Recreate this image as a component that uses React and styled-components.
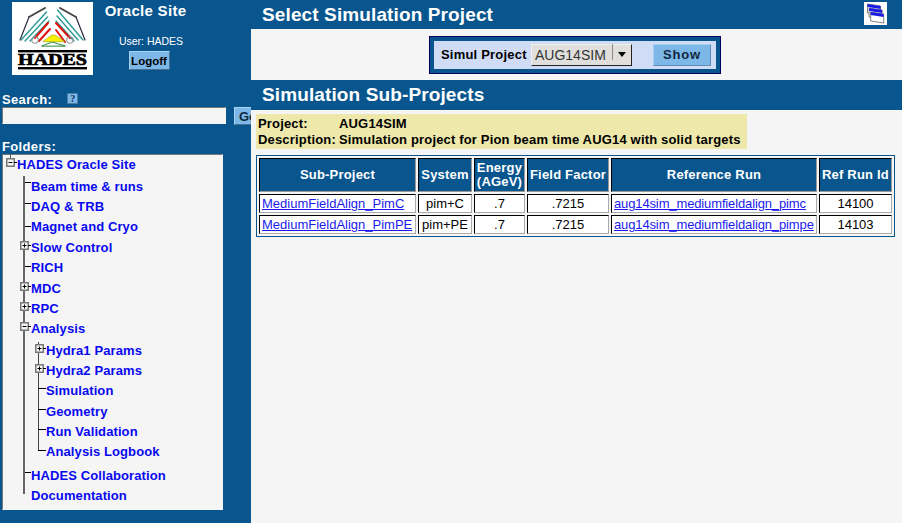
import styled, { createGlobalStyle } from "styled-components";

const BLUE = "#09568f";

const Global = createGlobalStyle`
   html, body {
      margin: 0;
      padding: 0;
      background: ${BLUE};
   }
   body {
      font-family: "Liberation Sans", Arial, sans-serif;
   }
`;

const tree = [
   { label: "Beam time & runs", top: 0, tick: 6 },
   { label: "DAQ & TRB", top: 0, tick: 7 },
   { label: "Magnet and Cryo", top: 0, tick: 10 },
   { label: "Slow Control", top: 1, box: "plus" },
   { label: "RICH", top: 0, tick: 9 },
   { label: "MDC", top: 1, box: "plus" },
   { label: "RPC", top: 0, box: "plus" },
   { label: "Analysis", top: 0, box: "minus" },
];

const analysis = [
   { label: "Hydra1 Params", top: 2, box: "plus" },
   { label: "Hydra2 Params", top: 0, box: "plus" },
   { label: "Simulation", top: 0, tick: 8 },
   { label: "Geometry", top: 1, tick: 8 },
   { label: "Run Validation", top: 0, tick: 8 },
   { label: "Analysis Logbook", top: 0, tick: 9 },
];

const rows = [
   ["MediumFieldAlign_PimC", "pim+C", ".7", ".7215", "aug14sim_mediumfieldalign_pimc", "14100"],
   ["MediumFieldAlign_PimPE", "pim+PE", ".7", ".7215", "aug14sim_mediumfieldalign_pimpe", "14103"],
];

function Logo() {
   return (
      <LogoBox>
         <svg width="81" height="73" viewBox="0 0 81 73">
            <g fill="none" strokeLinecap="round">
               <path d="M8 38 L17 15" stroke="#2b2b44" strokeWidth="1.2" />
               <path d="M73 38 L64 15" stroke="#2b2b44" strokeWidth="1.2" />
               <path d="M17 15 L33 6" stroke="#444" strokeWidth="2" />
               <path d="M48 6 L64 15" stroke="#444" strokeWidth="2" />
               <path d="M9 38 L34.5 10 M13 39 L35.5 15 M18 39 L37 19" stroke="#2a9a96" strokeWidth="1.4" />
               <path d="M71 38 L45.5 8 M66 38 L45 14 M62 39 L44 19" stroke="#2a9a96" strokeWidth="1.4" />
               <path d="M23 36 L36 21 M27 39 L38 27" stroke="#e01010" strokeWidth="2" />
               <path d="M58 36 L44 21 M53 40 L44 28" stroke="#e01010" strokeWidth="2" />
               <circle cx="23" cy="38" r="3.2" stroke="#999" strokeWidth="1.1" />
               <circle cx="58" cy="38" r="3.2" stroke="#999" strokeWidth="1.1" />
               <path d="M30 44 L40 40 L53 44 Z" stroke="#2a8a3a" strokeWidth="1" />
            </g>
            <path d="M30.7 39.7 L39.7 33 L43 33 L53 39.7 Z" fill="#f6f000" stroke="#8a8a10" strokeWidth="0.5" />
            <rect x="6" y="48" width="69" height="2.4" fill="#000" />
            <rect x="6" y="65" width="69" height="2.4" fill="#000" />
            <LogoText x="40.5" y="63" textLength="69" lengthAdjust="spacingAndGlyphs">
               HADES
            </LogoText>
         </svg>
      </LogoBox>
   );
}

function StackIcon() {
   return (
      <IconBox>
         <svg width="19" height="21" viewBox="0 0 19 21">
            {[0, 1, 2].map((i) => (
               <g key={i} transform={`translate(${i * 1.6 + 1.5} ${i * 4 + 1})`}>
                  <path d="M0 0 L13 2 L13 11 L0 9 Z" fill="#fff" stroke="#666" strokeWidth="0.8" />
                  <path d="M0 0 L13 2 L13 5 L0 3 Z" fill="#1a1ae6" />
               </g>
            ))}
         </svg>
      </IconBox>
   );
}

function Handle({ kind }) {
   return (
      <HandleBox>
         <svg width="11" height="9" viewBox="0 0 11 9">
            <rect x="0.75" y="0.75" width="7.5" height="7.5" fill="#f5f5f5" stroke="#777" strokeWidth="1.5" />
            <path d="M2.5 4.5 H6.5" stroke="#000" strokeWidth="1" />
            {kind === "plus" && <path d="M4.5 2.5 V6.5" stroke="#000" strokeWidth="1" />}
            <path d="M8 4.5 H11" stroke="#000" strokeWidth="1" />
         </svg>
      </HandleBox>
   );
}

function TreeRow({ item }) {
   return (
      <Row $top={item.top}>
         {item.box ? <Handle kind={item.box} /> : null}
         {item.tick ? <Tick $y={item.tick} /> : null}
         <FolderLink href="#">{item.label}</FolderLink>
      </Row>
   );
}

export default function App() {
   return (
      <>
         <Global />
         <Page>
            <Sidebar>
               <Brand>
                  <Logo />
                  <BrandText>
                     <SiteName>Oracle Site</SiteName>
                     <UserName>User: HADES</UserName>
                     <SmallButton>Logoff</SmallButton>
                  </BrandText>
               </Brand>

               <SearchLabel>
                  Search:
                  <HelpIcon>?</HelpIcon>
               </SearchLabel>
               <SearchRow>
                  <SearchInput />
                  <GoButton>Go</GoButton>
               </SearchRow>

               <FoldersLabel>Folders:</FoldersLabel>
               <TreeBox>
                  <RootRow>
                     <RootHandle>
                        <Handle kind="minus" />
                     </RootHandle>
                     <FolderLink href="#">HADES Oracle Site</FolderLink>
                  </RootRow>
                  <Branch>
                     {tree.map((item) => (
                        <TreeRow key={item.label} item={item} />
                     ))}
                     <SubBranch>
                        {analysis.map((item) => (
                           <TreeRow key={item.label} item={item} />
                        ))}
                     </SubBranch>
                     <Row $top={4}>
                        <Tick $y={7} />
                        <FolderLink href="#">HADES Collaboration</FolderLink>
                     </Row>
                     <Row $top={0}>
                        <FolderLink href="#">Documentation</FolderLink>
                     </Row>
                  </Branch>
               </TreeBox>
            </Sidebar>

            <Main>
               <TitleBar>
                  Select Simulation Project
                  <StackIcon />
               </TitleBar>

               <FormArea>
                  <ProjectForm>
                     <FormLabel>Simul Project</FormLabel>
                     <SelectBox>
                        <SelectValue>AUG14SIM</SelectValue>
                        <SelectArrow />
                     </SelectBox>
                     <ShowButton>Show</ShowButton>
                  </ProjectForm>
               </FormArea>

               <SubTitleBar>Simulation Sub-Projects</SubTitleBar>

               <Info>
                  <InfoLine>
                     <InfoKey>Project:</InfoKey>
                     <span>AUG14SIM</span>
                  </InfoLine>
                  <InfoLine>
                     <InfoKey>Description:</InfoKey>
                     <span>Simulation project for Pion beam time AUG14 with solid targets</span>
                  </InfoLine>
               </Info>

               <Grid>
                  <colgroup>
                     <col width="157" />
                     <col width="54" />
                     <col width="51" />
                     <col width="82" />
                     <col width="206" />
                     <col width="73" />
                  </colgroup>
                  <thead>
                     <tr>
                        <Th>Sub-Project</Th>
                        <Th>System</Th>
                        <Th>
                           Energy
                           <br />
                           (AGeV)
                        </Th>
                        <Th>Field Factor</Th>
                        <Th>Reference Run</Th>
                        <Th>Ref Run Id</Th>
                     </tr>
                  </thead>
                  <tbody>
                     {rows.map((r) => (
                        <tr key={r[0]}>
                           <Td>
                              <CellLink href="#">{r[0]}</CellLink>
                           </Td>
                           <Td $center>{r[1]}</Td>
                           <Td $center>{r[2]}</Td>
                           <Td $center>{r[3]}</Td>
                           <Td>
                              <CellLink href="#" $tight>{r[4]}</CellLink>
                           </Td>
                           <Td $center>{r[5]}</Td>
                        </tr>
                     ))}
                  </tbody>
               </Grid>
            </Main>
         </Page>
      </>
   );
}

const Page = styled.div`
   display: flex;
   width: 902px;
   height: 523px;
   overflow: hidden;
   background: ${BLUE};
`;

const Sidebar = styled.div`
   flex: 0 0 251px;
   width: 251px;
   overflow: hidden;
   box-sizing: border-box;
   padding: 2px 0 0 2px;
   color: #fff;
`;

const Brand = styled.div`
   display: flex;
   height: 73px;
   padding-left: 10px;
`;

const LogoBox = styled.div`
   width: 81px;
   height: 73px;
   background: #fff;
   svg {
      display: block;
   }
`;

const LogoText = styled.text`
   font-family: "Liberation Serif", serif;
   font-weight: 700;
   font-size: 16px;
   text-anchor: middle;
   fill: #000;
   stroke: #000;
   stroke-width: 0.7px;
`;

const BrandText = styled.div`
   width: 85px;
   margin-left: 10px;
   display: flex;
   flex-direction: column;
   align-items: center;
`;

const SiteName = styled.div`
   font-size: 15px;
   font-weight: 700;
   line-height: 18px;
   letter-spacing: 0.3px;
   white-space: nowrap;
`;

const UserName = styled.div`
   font-size: 10.5px;
   line-height: 12px;
   margin-top: 15px;
   margin-left: 11px;
   white-space: nowrap;
`;

const SmallButton = styled.button`
   box-sizing: border-box;
   width: 41px;
   height: 19px;
   margin: 4px 0 0 7px;
   padding: 0;
   background: #7db7e8;
   border: 1px solid;
   border-color: #a8d0f0 #4a6f90 #4a6f90 #a8d0f0;
   color: #000;
   font-family: inherit;
   font-size: 11.5px;
   font-weight: 700;
`;

const SearchLabel = styled.div`
   display: flex;
   align-items: center;
   height: 14px;
   margin-top: 17px;
   font-size: 13px;
   font-weight: 700;
   letter-spacing: 0.35px;
`;

const HelpIcon = styled.span`
   box-sizing: border-box;
   display: block;
   width: 11px;
   height: 11px;
   margin-left: 15px;
   margin-top: -2px;
   background: #7db7e8;
   border: 1px solid #4a7ea8;
   color: #10305a;
   font-family: "Liberation Serif", serif;
   font-size: 10px;
   line-height: 9px;
   letter-spacing: 0;
   text-align: center;
`;

const SearchRow = styled.div`
   display: flex;
   margin-top: 1px;
`;

const SearchInput = styled.div`
   box-sizing: border-box;
   flex: 0 0 224px;
   height: 17px;
   background: #f5f5f5;
   border: 1px solid;
   border-color: #777 #f5f5f5 #f5f5f5 #777;
`;

const GoButton = styled.button`
   box-sizing: border-box;
   flex: 0 0 34px;
   height: 18px;
   margin-left: 8px;
   padding: 0 0 0 4px;
   text-align: left;
   background: #7db7e8;
   border: 1px solid;
   border-color: #a8d0f0 #4a6f90 #4a6f90 #a8d0f0;
   color: #10283e;
   font-family: inherit;
   font-size: 13px;
   font-weight: 700;
`;

const FoldersLabel = styled.div`
   margin-top: 15px;
   height: 14px;
   line-height: 14px;
   font-size: 13px;
   font-weight: 700;
   letter-spacing: 0.35px;
`;

const TreeBox = styled.div`
   box-sizing: border-box;
   width: 221px;
   height: 356px;
   background: #f5f5f5;
   border: 1px solid;
   border-color: #777 #f5f5f5 #f5f5f5 #777;
   padding: 0 0 0 3px;
`;

const RootRow = styled.div`
   display: flex;
   align-items: center;
   height: 18px;
`;

const RootHandle = styled.div`
   position: relative;
   flex: 0 0 11px;
   height: 9px;
   margin-top: -3px;
   &::before {
      content: "";
      position: absolute;
      left: 4px;
      top: -4px;
      width: 1px;
      height: 4px;
      background: #555;
   }
`;

const HandleBox = styled.span`
   position: absolute;
   left: -11px;
   top: 4px;
   width: 11px;
   height: 9px;
   z-index: 1;
   svg {
      display: block;
   }
   ${RootHandle} & {
      position: static;
   }
`;

const Branch = styled.div`
   position: relative;
   height: 318px;
   margin: 3px 0 0 17px;
   padding: 0 0 0 6px;
   border-left: 2px solid #666;
`;

const SubBranch = styled.div`
   position: relative;
   margin-left: 7px;
   padding-left: 8px;
   &::before {
      content: "";
      position: absolute;
      left: 0;
      top: 2px;
      bottom: 11px;
      width: 1px;
      background: #444;
   }
`;

const Row = styled.div`
   position: relative;
   display: flex;
   align-items: center;
   height: 20px;
   margin-top: ${(p) => p.$top}px;
`;

const Tick = styled.span`
   position: absolute;
   left: -6px;
   top: ${(p) => p.$y}px;
   width: 6px;
   height: 1px;
   background: #000;
   ${SubBranch} & {
      left: -8px;
      width: 8px;
   }
`;

const FolderLink = styled.a`
   color: #0808f0;
   font-size: 13px;
   font-weight: 700;
   letter-spacing: 0.1px;
   text-decoration: none;
   white-space: nowrap;
`;

const Main = styled.div`
   flex: 1;
   min-width: 0;
   background: #f5f5f5;
   height: 523px;
`;

const TitleBar = styled.div`
   display: flex;
   align-items: center;
   justify-content: space-between;
   box-sizing: border-box;
   height: 29px;
   padding: 0 15px 0 11px;
   background: ${BLUE};
   color: #fff;
   font-size: 19px;
   font-weight: 700;
   letter-spacing: 0.12px;
`;

const IconBox = styled.div`
   display: flex;
   align-items: center;
   justify-content: center;
   width: 23px;
   height: 23px;
   background: #fff;
   margin-top: -3px;
`;

const FormArea = styled.div`
   display: flex;
   justify-content: center;
   align-items: center;
   height: 51px;
   padding-right: 3px;
`;

const ProjectForm = styled.div`
   box-sizing: border-box;
   display: flex;
   align-items: center;
   width: 292px;
   height: 38px;
   padding-left: 7px;
   background: #d0dcf5;
   border: 5px solid ${BLUE};
   outline: 1px solid #000060;
   outline-offset: -1px;
`;

const FormLabel = styled.span`
   flex: 0 0 86px;
   color: #000;
   font-size: 13px;
   font-weight: 700;
   letter-spacing: 0.2px;
   white-space: nowrap;
`;

const SelectBox = styled.div`
   box-sizing: border-box;
   display: flex;
   align-items: center;
   width: 101px;
   height: 22px;
   margin-left: 4px;
   padding-left: 3px;
   background: #e0dfdc;
   border: 1px solid;
   border-color: #f0efec #222 #222 #f0efec;
`;

const SelectValue = styled.span`
   flex: 1;
   color: #333;
   font-size: 14px;
   white-space: nowrap;
`;

const SelectArrow = styled.span`
   position: relative;
   flex: none;
   width: 0;
   height: 0;
   margin-right: 5px;
   border-left: 4px solid transparent;
   border-right: 4px solid transparent;
   border-top: 5px solid #000;
   &::before {
      content: "";
      position: absolute;
      left: -10px;
      top: -13px;
      width: 1px;
      height: 16px;
      background: #8a8a86;
   }
`;

const ShowButton = styled.button`
   box-sizing: border-box;
   width: 58px;
   height: 22px;
   margin-left: 21px;
   padding: 0;
   background: #7db7e8;
   border: 1px solid;
   border-color: #a8d0f0 #5f8db5 #5f8db5 #a8d0f0;
   color: #10283e;
   font-family: inherit;
   font-size: 13px;
   font-weight: 700;
   letter-spacing: 0.8px;
`;

const SubTitleBar = styled.div`
   display: flex;
   align-items: center;
   box-sizing: border-box;
   height: 30px;
   padding-left: 11px;
   background: ${BLUE};
   color: #fff;
   font-size: 19px;
   font-weight: 700;
   letter-spacing: 0.12px;
`;

const Info = styled.div`
   box-sizing: border-box;
   width: 491px;
   height: 35px;
   margin: 4px 0 0 5px;
   padding: 2px 2px;
   background: #eee8aa;
   color: #000;
   font-size: 13px;
   font-weight: 700;
   letter-spacing: 0.17px;
`;

const InfoLine = styled.div`
   display: flex;
   height: 16px;
   line-height: 16px;
   white-space: nowrap;
`;

const InfoKey = styled.span`
   flex: 0 0 81px;
`;

const Grid = styled.table`
   box-sizing: border-box;
   table-layout: fixed;
   width: 639px;
   margin: 6px 0 0 5px;
   border: 1px solid ${BLUE};
   border-spacing: 2px;
`;

const Th = styled.th`
   box-sizing: border-box;
   height: 34px;
   padding: 0;
   background: ${BLUE};
   color: #fff;
   font-size: 13px;
   line-height: 14px;
   letter-spacing: 0.2px;
   text-align: center;
   white-space: nowrap;
   border: 1px solid;
   border-color: #000 #999 #999 #000;
`;

const Td = styled.td`
   box-sizing: border-box;
   height: 19px;
   padding: 0 2px;
   background: #fff;
   color: #000;
   font-size: 13px;
   text-align: ${(p) => (p.$center ? "center" : "left")};
   white-space: nowrap;
   border: 1px solid;
   border-color: #000 #aaa #aaa #000;
`;

const CellLink = styled.a`
   color: #1a1aee;
   text-decoration: underline;
   letter-spacing: ${(p) => (p.$tight ? "-0.13px" : "0")};
`;
